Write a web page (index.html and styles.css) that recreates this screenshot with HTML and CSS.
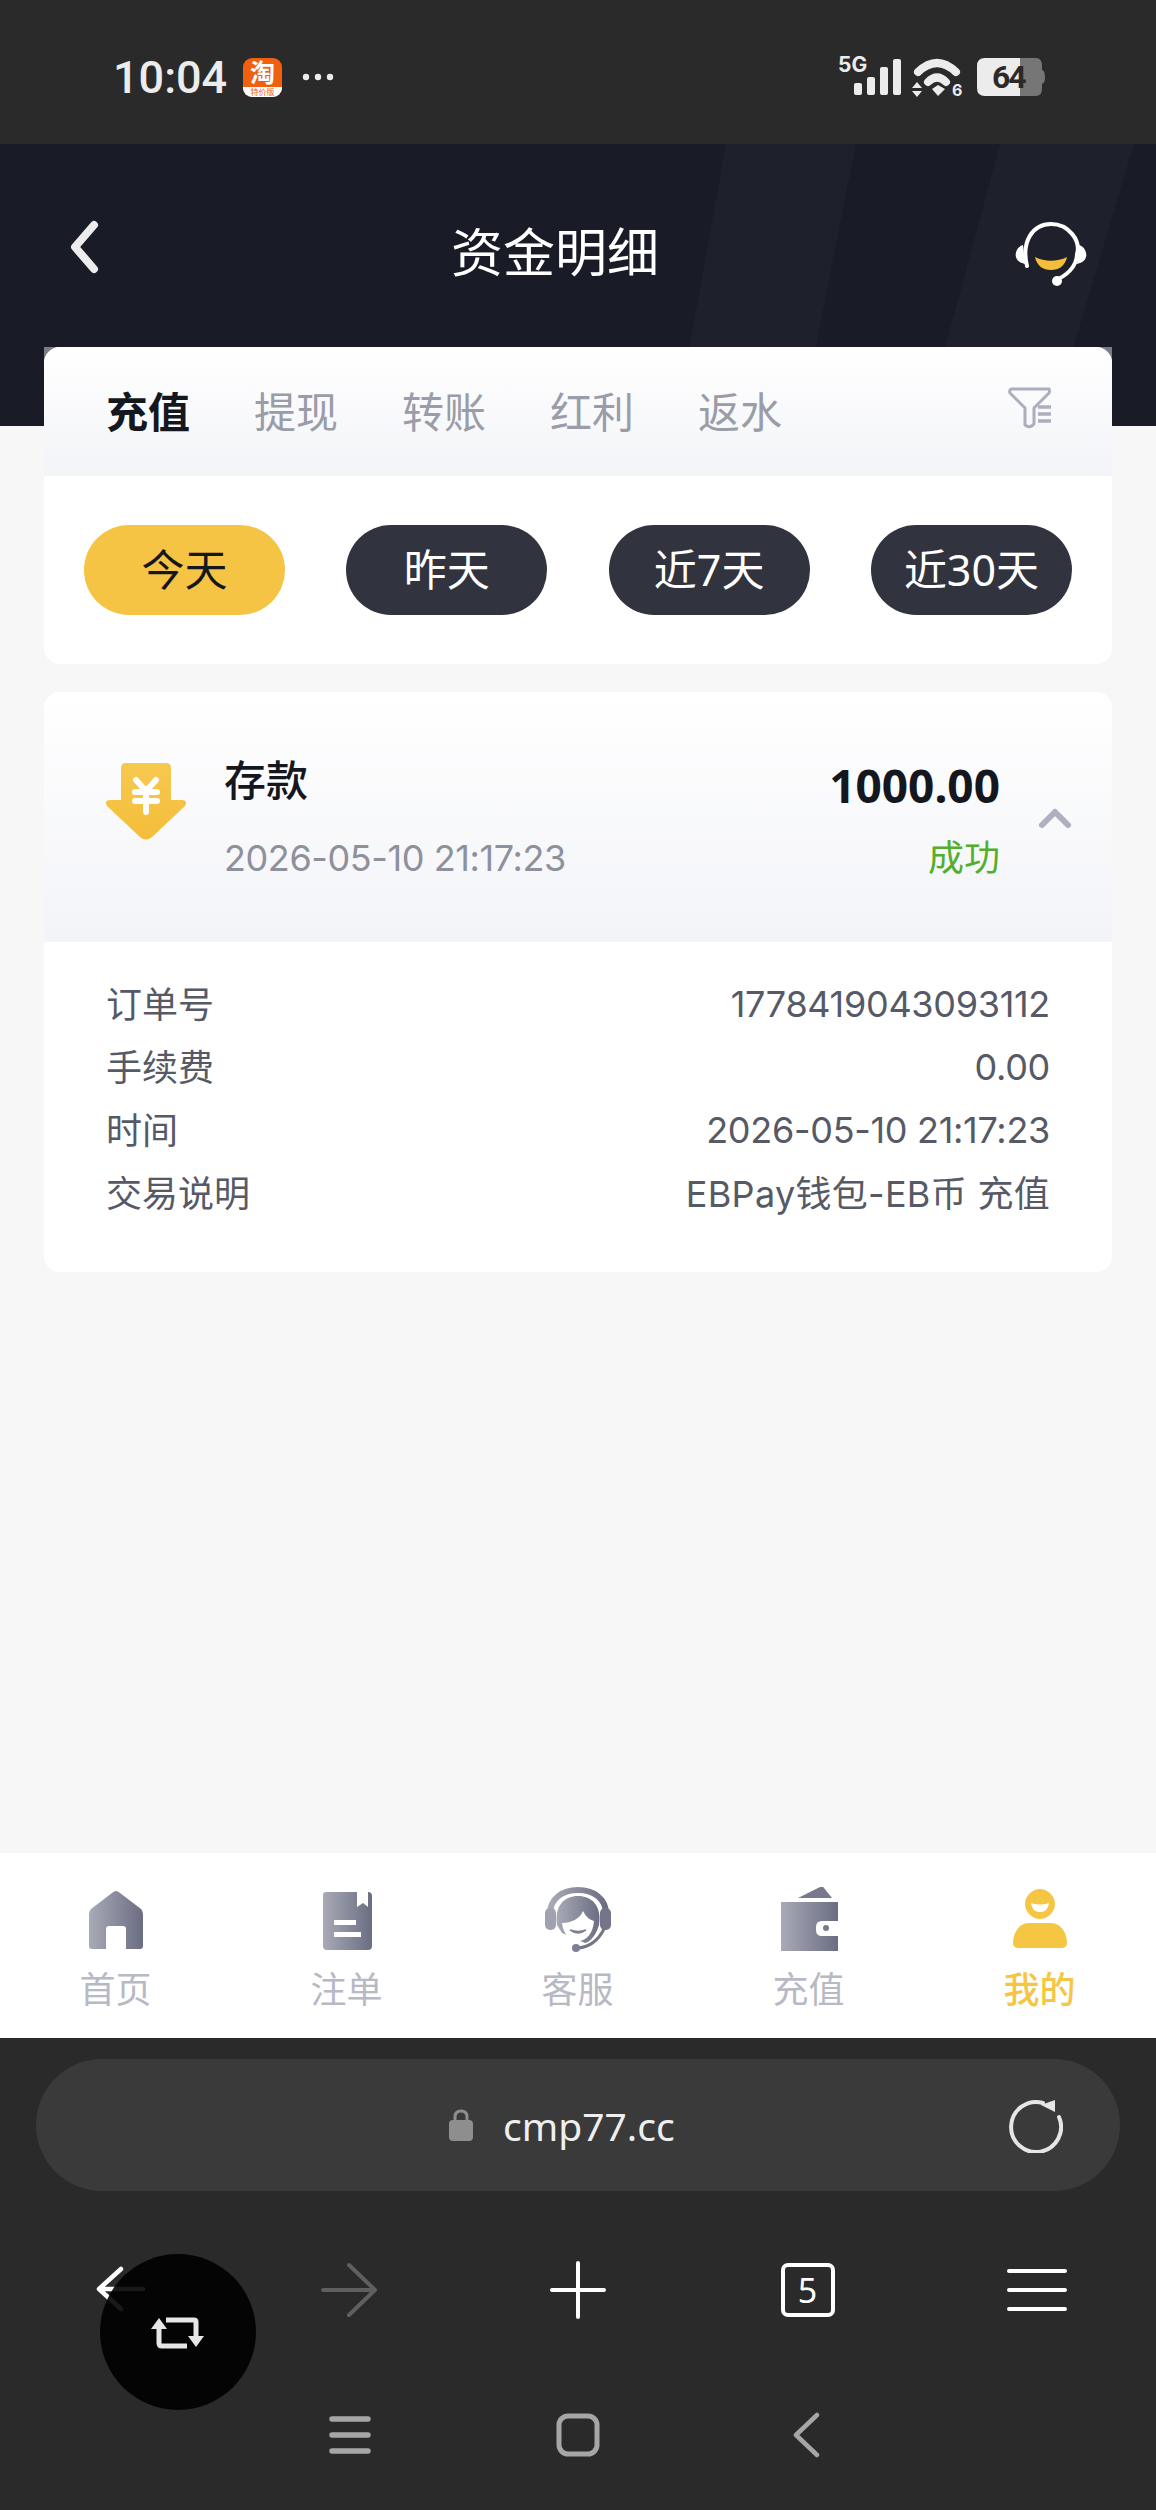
FILE: index.html
```html
<!DOCTYPE html>
<html lang="zh">
<head>
    <meta charset="UTF-8">
    <meta name="viewport" content="width=device-width, initial-scale=1.0">
    <title>资金明细</title>
    <link rel="stylesheet" href="styles.css">
</head>
<body>

<svg class="defs" width="0" height="0">
    <defs>
        <linearGradient id="navgrad" x1="0" y1="0" x2="1" y2="0">
            <stop offset="0" stop-color="#a8aab6"/>
            <stop offset="1" stop-color="#6b6e82"/>
        </linearGradient>
        <linearGradient id="arrowgrad" x1="0" y1="0" x2="0" y2="1">
            <stop offset="0" stop-color="#f6c94f"/>
            <stop offset="1" stop-color="#f5bd3a"/>
        </linearGradient>
    </defs>
</svg>

<div class="statusbar">
    <div class="status-left">
        <span class="clock">10:04</span>
        <div class="tb-icon"><span class="tb-main">淘</span><span class="tb-sub">特价版</span></div>
        <svg class="dots" width="32" height="8" viewBox="0 0 32 8"><circle cx="4" cy="4" r="3.2"/><circle cx="16" cy="4" r="3.2"/><circle cx="28" cy="4" r="3.2"/></svg>
    </div>
    <svg class="status-right" width="216" height="50" viewBox="0 0 216 50">
        <text x="6" y="23" class="st-5g">5G</text>
        <rect x="22" y="34" width="8" height="12" rx="2"/>
        <rect x="35" y="28" width="8" height="18" rx="2"/>
        <rect x="48" y="18" width="8" height="28" rx="2"/>
        <rect x="61" y="10" width="8" height="36" rx="2"/>
        <path class="wifi" d="M86 23 Q105 5 124 23"/>
        <path class="wifi" d="M96 33 Q105 24 114 33"/>
        <path d="M100 40 L106 36 L113 40 L106 47 Z"/>
        <path d="M80 39 L85 33 L90 39 Z M80 42 L90 42 L85 48 Z"/>
        <text x="120" y="47" class="st-six">6</text>
        <path class="batt-bg" d="M188 9 H204 Q210 9 210 17 V21 Q213 22 213 28 Q213 34 210 35 V39 Q210 47 204 47 H188 Z"/>
        <path d="M188 9 H153 Q145 9 145 17 V39 Q145 47 153 47 H188 Z"/>
        <text x="160" y="39" class="st-batt">64</text>
    </svg>
</div>

<div class="header">
    <svg class="stripes" width="1156" height="282" viewBox="0 0 1156 282">
        <polygon points="726,0 856,0 800,282 675,282"/>
        <polygon points="1000,0 1134,0 1050,282 924,282"/>
    </svg>
    <svg class="back" width="36" height="54" viewBox="0 0 36 54"><path d="M28 5 L9 27 L28 49" fill="none" stroke="#ececec" stroke-width="8" stroke-linecap="round" stroke-linejoin="round"/></svg>
    <h1>资金明细</h1>
    <svg class="service" width="72" height="66" viewBox="0 0 72 66">
        <path d="M12 45 C6 20 18 3 36 3 C54 3 66 20 62 33 C62 46 50 56 40 59" fill="none" stroke="#fff" stroke-width="4" stroke-linecap="round"/>
        <path d="M8 24 C1 26 0 34 1 36 C2 40 6 42 10 43 Z M64 24 C71 26 72 34 71 36 C70 40 66 42 62 43 Z" fill="#fff"/>
        <circle cx="42" cy="60" r="5" fill="#fff"/>
        <path d="M20 36 C30 41 42 41 52 36 C50 45 44 49 36 49 C28 49 22 45 20 36 Z" fill="#f5bd3a"/>
    </svg>
</div>

<div class="main">
    <div class="filter-wrap">
        <div class="card filter-card">
            <div class="tabs">
                <span class="tab active">充值</span>
                <span class="tab">提现</span>
                <span class="tab">转账</span>
                <span class="tab">红利</span>
                <span class="tab">返水</span>
                <svg class="filter-icon" width="44" height="44" viewBox="0 0 44 44">
                    <path d="M3 3 H41 Q42 5 41 7 L26 22 V38 Q22 43 17 39 V22 L2 7 Q1 4 3 3 Z" fill="none" stroke="#abaebd" stroke-width="3" stroke-linejoin="round"/>
                    <path d="M30 21 H43 M30 28 H43 M30 35 H43" stroke="#abaebd" stroke-width="3.5"/>
                </svg>
            </div>
            <div class="pills">
                <span class="pill on">今天</span>
                <span class="pill">昨天</span>
                <span class="pill">近7天</span>
                <span class="pill">近30天</span>
            </div>
        </div>
    </div>

    <div class="card record-card">
        <div class="record-head">
            <svg class="deposit-icon" width="82" height="78" viewBox="0 0 82 78">
                <path d="M16 5 Q16 0 21 0 H61 Q66 0 66 5 V37 H77 Q83 37 80 43 L47 74 Q41 79 35 74 L2 43 Q-1 37 5 37 H16 Z" fill="url(#arrowgrad)"/>
                <path d="M31 17 L41 28 L51 17 M30 29 H52 M30 38 H52 M41 28 V49" fill="none" stroke="#fff" stroke-width="6" stroke-linecap="round" stroke-linejoin="round"/>
            </svg>
            <div class="record-info">
                <div class="record-name">存款</div>
                <div class="record-date">2026-05-10 21:17:23</div>
            </div>
            <div class="record-side">
                <div class="record-amount">1000.00</div>
                <div class="record-status">成功</div>
            </div>
            <svg class="chevron" width="34" height="22" viewBox="0 0 34 22"><path d="M4 18 L17 5 L30 18" fill="none" stroke="#adb0bf" stroke-width="6" stroke-linecap="round" stroke-linejoin="round"/></svg>
        </div>
        <div class="record-body">
            <div class="row"><span class="key">订单号</span><span class="val">1778419043093112</span></div>
            <div class="row"><span class="key">手续费</span><span class="val">0.00</span></div>
            <div class="row"><span class="key">时间</span><span class="val">2026-05-10 21:17:23</span></div>
            <div class="row"><span class="key">交易说明</span><span class="val val-wide">EBPay钱包-EB币 充值</span></div>
        </div>
    </div>
</div>

<div class="tabbar">
    <div class="nav-item">
        <svg width="66" height="66" viewBox="0 0 66 66"><path d="M33 4 Q35 4 37 6 L58 22 Q60 24 60 27 V59 Q60 62 57 62 H43 V42 Q43 39 40 39 H26 Q23 39 23 42 V62 H9 Q6 62 6 59 V27 Q6 24 8 22 L29 6 Q31 4 33 4 Z" fill="url(#navgrad)"/></svg>
        <span>首页</span>
    </div>
    <div class="nav-item">
        <svg width="66" height="66" viewBox="0 0 66 66"><path d="M12 5 H43 V20 L49 16 L54 20 V5 Q58 5 58 9 V59 Q58 63 54 63 H13 Q9 63 9 59 V8 Q9 5 12 5 Z" fill="url(#navgrad)"/><path d="M20 33 H42 V38 H20 Z M20 45 H47 V50 H20 Z" fill="#fff"/></svg>
        <span>注单</span>
    </div>
    <div class="nav-item">
        <svg width="66" height="66" viewBox="0 0 66 66">
            <path d="M5 27 C5 11 18 3 33 3 C48 3 61 11 61 27" fill="none" stroke="url(#navgrad)" stroke-width="6"/>
            <rect x="0" y="21" width="11" height="22" rx="5" fill="#a0a2b0"/>
            <rect x="55" y="21" width="11" height="22" rx="5" fill="#737689"/>
            <path d="M12 38 C9 18 20 9 33 9 C46 9 57 18 54 38 C50 52 42 56 40 56 L17 46 Z" fill="url(#navgrad)"/>
            <path d="M17 36 C26 36 35 32 38 24 C41 30 45 33 49 34 C48 46 42 54 33 54 C24 54 18 46 17 36 Z" fill="#fff"/>
            <path d="M25 43 Q33 49 41 43 Q33 46 25 43 Z" stroke="#7d8092" stroke-width="1.5" fill="#7d8092"/>
            <path d="M59 42 C53 54 44 60 33 61" fill="none" stroke="#737689" stroke-width="3"/>
            <circle cx="31" cy="61" r="4" fill="#7d8092"/>
        </svg>
        <span>客服</span>
    </div>
    <div class="nav-item">
        <svg width="66" height="66" viewBox="0 0 66 66"><path d="M22 11 L44 0 Q47 -1 48 1 L56 11 Z" fill="#777a8c"/><path d="M5 15 H62 V34 H46 Q40 34 40 40 V43 Q40 49 46 49 H62 V64 H5 Z" fill="url(#navgrad)"/><circle cx="50" cy="41" r="3" fill="#777a8c"/></svg>
        <span>充值</span>
    </div>
    <div class="nav-item nav-on">
        <svg width="66" height="66" viewBox="0 0 66 66"><path fill-rule="evenodd" d="M33 2 C41 2 48 9 48 17 C48 25 41 32 33 32 C25 32 18 25 18 17 C18 9 25 2 33 2 Z M24 16 Q33 19 42 16 Q41 25 33 25 Q25 25 24 16 Z" fill="#f5c644"/><path d="M22 36 H44 C54 36 60 46 60 56 Q60 61 54 61 H12 Q6 61 6 56 C6 46 12 36 22 36 Z" fill="#f5c644"/></svg>
        <span>我的</span>
    </div>
</div>

<div class="browser">
    <div class="urlbar">
        <svg class="lock" width="26" height="32" viewBox="0 0 26 32"><path d="M7 13 V8 Q7 2 13 2 Q19 2 19 8 V13" fill="none" stroke="#8e8e8e" stroke-width="3"/><rect x="1" y="11" width="24" height="21" rx="4" fill="#8e8e8e"/></svg>
        <span class="url">cmp77.cc</span>
        <svg class="reload" width="56" height="56" viewBox="0 0 56 56"><path d="M36 6 A25 25 0 1 0 52 20" fill="none" stroke="#e6e6e6" stroke-width="4" stroke-linecap="round"/><path d="M34 8 L48 3 V15 Z" fill="#e6e6e6"/></svg>
    </div>
    <div class="toolbar">
        <svg width="60" height="72" viewBox="0 0 60 72"><path d="M35 15 L13 35 L35 55 M13 35 H57" fill="none" stroke="#fff" stroke-width="4.5" stroke-linecap="round" stroke-linejoin="round"/></svg>
        <svg width="60" height="72" viewBox="0 0 60 72"><path d="M32 11 L58 36 L32 61 M6 36 H58" fill="none" stroke="#5f5f5f" stroke-width="4" stroke-linecap="round" stroke-linejoin="round"/></svg>
        <svg width="60" height="60" viewBox="0 0 60 60"><path d="M30 3 V57 M4 30 H56" stroke="#fff" stroke-width="4" stroke-linecap="round"/></svg>
        <div class="tabcount">5</div>
        <svg class="menu-icon" width="60" height="46" viewBox="0 0 60 46"><path d="M2 4 H58 M2 23 H58 M2 42 H58" stroke="#fff" stroke-width="4" stroke-linecap="round"/></svg>
    </div>
    <div class="sysnav">
        <svg width="42" height="40" viewBox="0 0 42 40"><path d="M3 4 H39 M3 20 H39 M3 36 H39" stroke="#a6a6a6" stroke-width="5.5" stroke-linecap="round"/></svg>
        <svg width="44" height="44" viewBox="0 0 44 44"><rect x="3" y="3" width="38" height="38" rx="9" fill="none" stroke="#a6a6a6" stroke-width="5"/></svg>
        <svg class="sys-back" width="32" height="46" viewBox="0 0 32 46"><path d="M27 3 L6 23 L27 43" fill="none" stroke="#a6a6a6" stroke-width="4.5" stroke-linecap="round" stroke-linejoin="round"/></svg>
    </div>
</div>

<div class="float-btn">
    <svg width="54" height="32" viewBox="0 0 54 32"><path d="M8 9 V26 Q8 29 11 29 H36 M15 3 H43 Q45 3 45 5 V22" fill="none" stroke="#e6e6e6" stroke-width="5"/><path d="M0 12 L8 1 L16 12 Z M37 19 L45 30 L53 19 Z" fill="#e6e6e6"/></svg>
</div>

</body>
</html>
```

FILE: styles.css
```css
html, body {
    margin: 0;
    padding: 0;
}
body {
    position: relative;
    width: 1156px;
    height: 2510px;
    display: flex;
    flex-direction: column;
    overflow: hidden;
    background-color: #f7f7f7;
    font-family: "Noto Sans", "Noto Sans CJK SC", sans-serif;
}
.defs {
    position: absolute;
}

/* status bar */
.statusbar {
    height: 144px;
    flex: none;
    display: flex;
    align-items: center;
    justify-content: space-between;
    padding: 15px 108px 5px 113px;
    box-sizing: border-box;
    background-color: #2a2a2a;
}
.status-left {
    display: flex;
    align-items: center;
}
.clock {
    width: 130px;
    font-size: 45px;
    font-weight: 500;
    color: #ececec;
    font-family: Roboto, sans-serif;
}
.tb-icon {
    width: 39px;
    height: 39px;
    display: flex;
    flex-direction: column;
    align-items: center;
    border-radius: 9px;
    background-color: #f0600f;
}
.tb-main {
    height: 29px;
    font-size: 25px;
    line-height: 28px;
    font-weight: 700;
    color: #fff;
}
.tb-sub {
    width: 100%;
    height: 10px;
    font-size: 8px;
    line-height: 10px;
    text-align: center;
    color: #f0600f;
    background-color: #fff;
    border-radius: 0 0 9px 9px;
}
.dots {
    margin-left: 20px;
    fill: #ececec;
}
.status-right {
    margin-top: -6px;
    fill: #ececec;
}
.st-5g {
    font-size: 21px;
    font-weight: 700;
    font-family: Inter, sans-serif;
}
.st-six {
    font-size: 16px;
    font-weight: 700;
    font-family: Inter, sans-serif;
}
.st-batt {
    font-size: 32px;
    font-weight: 700;
    letter-spacing: -2px;
    font-family: Roboto, sans-serif;
    fill: #2a2a2a;
}
.wifi {
    fill: none;
    stroke: #ececec;
    stroke-width: 8;
    stroke-linecap: round;
}
.batt-bg {
    fill: #767676;
}

/* header */
.header {
    position: relative;
    height: 282px;
    flex: none;
    display: flex;
    align-items: flex-start;
    padding: 76px 69px 0 66px;
    box-sizing: border-box;
    background-color: #191c27;
}
.stripes {
    position: absolute;
    top: 0;
    left: 0;
    fill: #1e212c;
}
.back, .service, .header h1 {
    position: relative;
}
.header h1 {
    margin: -8px auto 0 349px;
    font-size: 52px;
    line-height: 76px;
    font-weight: 400;
    color: #fff;
    font-family: "Noto Sans CJK SC", sans-serif;
}
.service {
    margin-top: 1px;
}

/* cards */
.main {
    flex: 1;
    padding: 0 44px;
    min-height: 0;
}
.filter-wrap {
    position: relative;
    margin-top: -79px;
    background: linear-gradient(#7c7d84 16px, transparent 16px);
}
.card {
    position: relative;
    border-radius: 16px;
    overflow: hidden;
    background-color: #fff;
}
.filter-card {
    height: 317px;
}
.tabs {
    height: 129px;
    display: flex;
    align-items: center;
    gap: 64px;
    padding: 0 62px 4px;
    box-sizing: border-box;
    background: linear-gradient(#ffffff, #f3f4f8);
}
.tab {
    font-size: 42px;
    color: #9a9ca8;
    font-family: "Noto Sans CJK SC", sans-serif;
}
.tab.active {
    font-weight: 700;
    color: #15171f;
}
.filter-icon {
    margin-left: auto;
    margin-right: -2px;
    margin-top: -4px;
}
.pills {
    display: flex;
    justify-content: space-between;
    padding: 49px 40px 0;
}
.pill {
    width: 201px;
    height: 90px;
    padding-bottom: 5px;
    box-sizing: border-box;
    border-radius: 45px;
    display: flex;
    align-items: center;
    justify-content: center;
    font-size: 43px;
    color: #fff;
    background-color: #31333f;
}
.pill.on {
    color: #15171f;
    background-color: #f5c444;
}
.record-card {
    margin-top: 28px;
}
.record-head {
    height: 250px;
    display: flex;
    align-items: center;
    padding: 0 40px 0 61px;
    box-sizing: border-box;
    background: linear-gradient(#ffffff, #f3f4f8);
}
.deposit-icon {
    margin-top: -30px;
}
.record-info {
    margin-left: 37px;
    margin-top: 2px;
}
.record-name {
    font-size: 42px;
    line-height: 60px;
    font-weight: 500;
    color: #15171f;
    font-family: "Noto Sans CJK SC", sans-serif;
}
.record-date {
    margin-top: 20px;
    font-size: 36px;
    line-height: 60px;
    letter-spacing: -0.4px;
    color: #8e909c;
    font-family: Inter, "Noto Sans CJK SC", sans-serif;
}
.record-side {
    margin-left: auto;
    text-align: right;
    margin-top: 6px;
}
.record-amount {
    font-size: 46px;
    line-height: 60px;
    font-weight: 700;
    color: #15171f;
}
.record-status {
    margin-top: 10px;
    font-size: 36px;
    line-height: 60px;
    color: #53ae2c;
    font-family: "Noto Sans CJK SC", sans-serif;
}
.chevron {
    margin-left: 38px;
    margin-top: 2px;
}
.record-body {
    padding: 30px 62px 48px;
}
.row {
    height: 63px;
    display: flex;
    align-items: center;
    justify-content: space-between;
    font-size: 36px;
    color: #565966;
    font-family: "Noto Sans CJK SC", sans-serif;
}
.key {
    margin-top: -3px;
}
.val {
    letter-spacing: -0.3px;
    font-family: Inter, "Noto Sans CJK SC", sans-serif;
}
.val-wide {
    margin-top: -3px;
    letter-spacing: 0.3px;
}

/* bottom tabs */
.tabbar {
    height: 185px;
    flex: none;
    display: grid;
    grid-template-columns: repeat(5, 231px);
    background-color: #fff;
}
.nav-item {
    display: flex;
    flex-direction: column;
    align-items: center;
    padding-top: 34px;
    font-size: 36px;
    line-height: 52px;
    color: #b7b9c4;
    font-family: "Noto Sans CJK SC", sans-serif;
}
.nav-item span {
    margin-top: 8px;
}
.nav-on {
    font-weight: 500;
    color: #f5c644;
}

/* browser chrome */
.browser {
    height: 472px;
    flex: none;
    padding-top: 21px;
    box-sizing: border-box;
    background-color: #2a2a2a;
}
.urlbar {
    height: 132px;
    margin: 0 36px;
    padding: 0 57px 0 412px;
    border-radius: 66px;
    box-sizing: border-box;
    display: flex;
    align-items: center;
    background-color: #3a3a3a;
}
.url {
    margin-left: 29px;
    font-size: 39px;
    color: #efefef;
}
.reload {
    margin-left: auto;
}
.toolbar {
    height: 72px;
    margin-top: 63px;
    display: grid;
    grid-template-columns: repeat(5, 231px);
    align-items: center;
    justify-items: center;
}
.tabcount {
    width: 54px;
    height: 54px;
    margin-left: -2px;
    border: 4px solid #fff;
    border-radius: 7px;
    box-sizing: border-box;
    display: flex;
    align-items: center;
    justify-content: center;
    font-size: 34px;
    color: #fff;
}
.menu-icon {
    margin-left: -6px;
}
.sysnav {
    margin-top: 86px;
    padding-left: 329px;
    display: flex;
    align-items: center;
    gap: 185px;
}
.sys-back {
    margin-left: 5px;
}
.float-btn {
    position: absolute;
    left: 100px;
    top: 2254px;
    width: 156px;
    height: 156px;
    border-radius: 50%;
    display: flex;
    align-items: center;
    justify-content: center;
    background-color: rgba(0, 0, 0, 0.9);
}
.float-btn svg {
    margin-top: 1px;
}
```
